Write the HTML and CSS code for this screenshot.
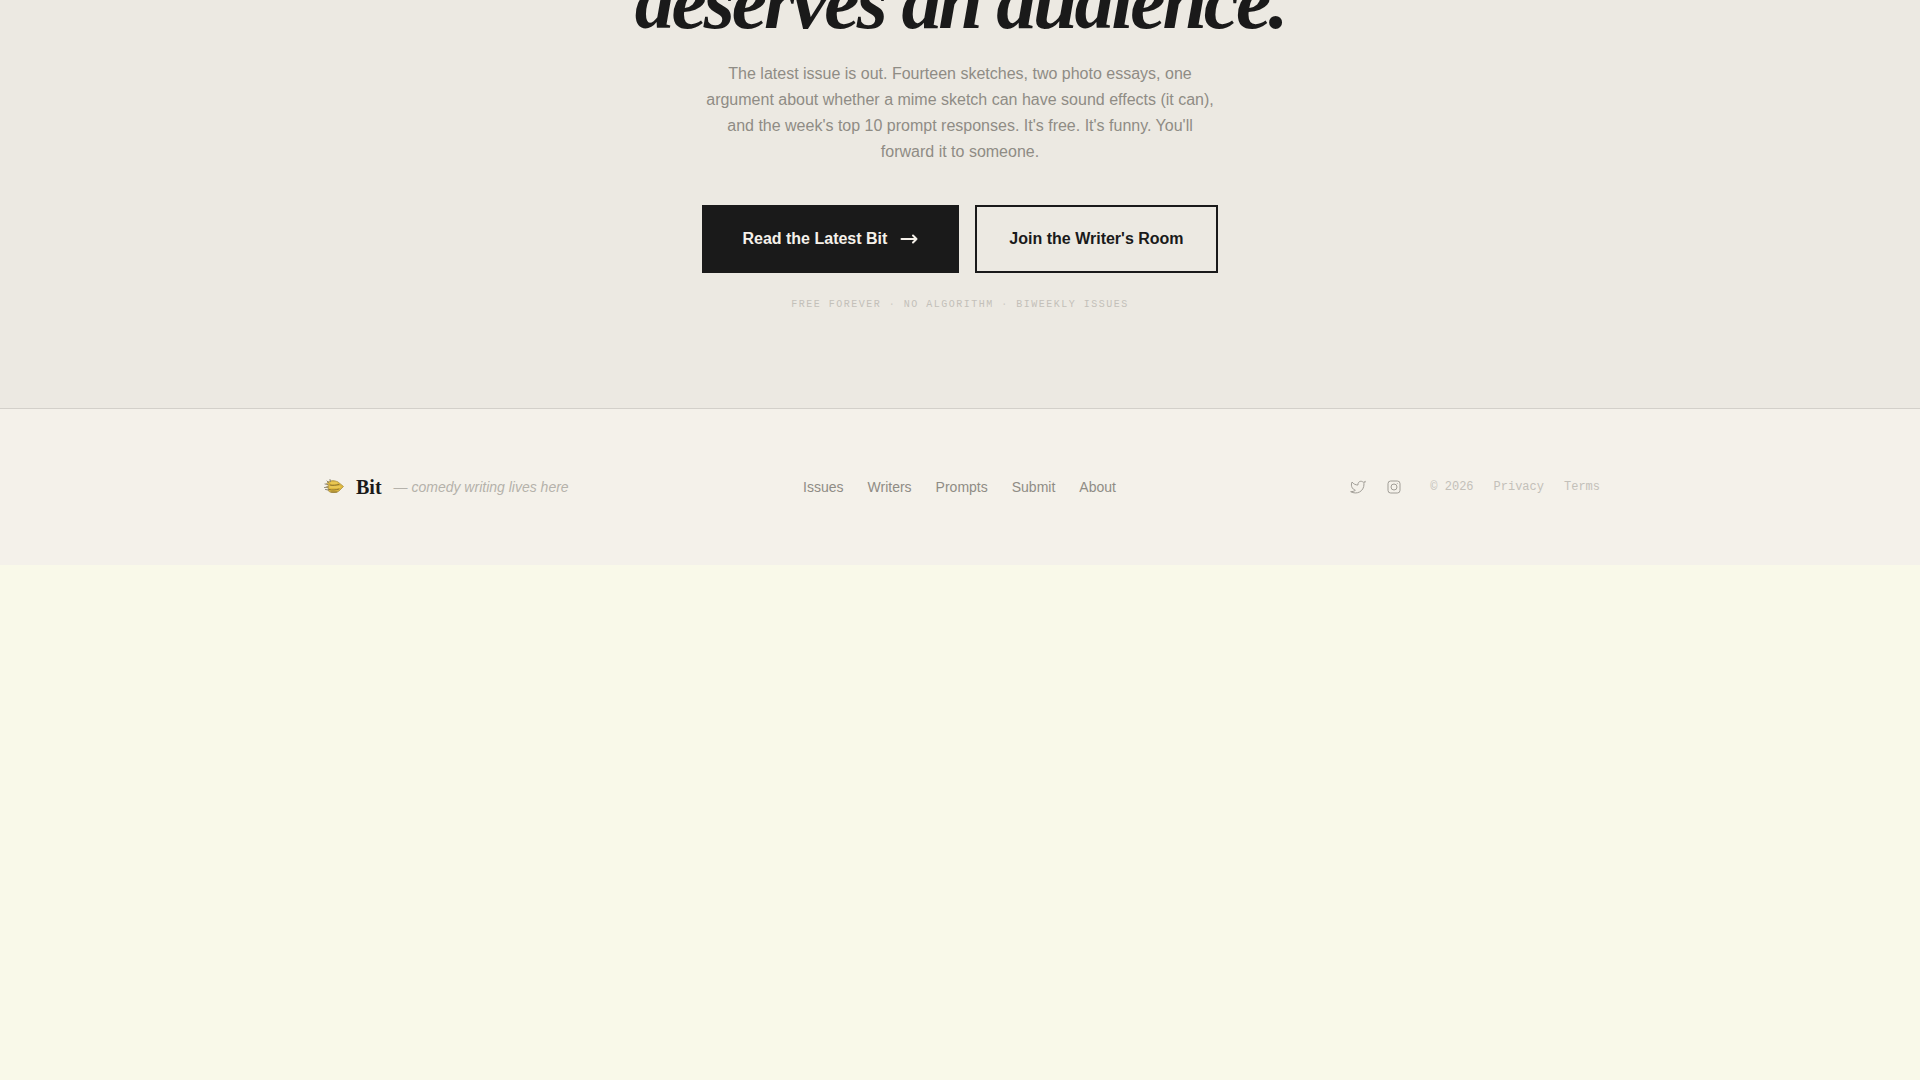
FILE: index.html
```html
<!DOCTYPE html>
<html lang="en">
<head>
<meta charset="utf-8">
<meta name="viewport" content="width=device-width, initial-scale=1">
<title>Bit</title>
<link rel="stylesheet" href="styles.css">
</head>
<body>
<main class="cta">
  <h2 class="cta-title">deserves an audience.</h2>
  <p class="cta-text">The latest issue is out. Fourteen sketches, two photo essays, one argument about whether a mime sketch can have sound effects (it can), and the week's top 10 prompt responses. It's free. It's funny. You'll forward it to someone.</p>
  <div class="cta-actions">
    <button class="btn btn-solid" type="button">Read the Latest Bit
      <svg class="arrow" viewBox="0 0 20 20" aria-hidden="true"><path d="M2.500 10h15M14 6.500l3.500 3.500-3.500 3.500"/></svg>
    </button>
    <button class="btn btn-outline" type="button">Join the Writer's Room</button>
  </div>
  <p class="cta-note">FREE FOREVER <span class="dot">·</span> NO ALGORITHM <span class="dot">·</span> BIWEEKLY ISSUES</p>
</main>
<footer class="footer">
  <div class="footer-inner">
    <div class="brand">
      <svg class="brand-mark" viewBox="0 0 28 28" aria-hidden="true">
        <path class="mark-body" d="M8 9c3-2 7-1.500 10 0l5.500 4.500-4.500 4.500c-3 2-7 2-10 .5l-1-1.500 1-1-2.500-2 2-1.500-1.500-1.500z"/>
        <path class="mark-line" d="M5 11l3 .5M4.500 14.500l4-.5M5.500 16.500l3 .5M7 8l2 2M10 6.500l.5 2"/>
        <path class="mark-stripe" d="M10 12c3 1 6 0 9-.5M9 16.500c3 1 7 .5 10-.5M11 19h6"/>
        <path class="mark-shine" d="M11 10h6M10 14h10"/>
      </svg>
      <span class="brand-name">Bit</span>
      <span class="brand-tag">— comedy writing lives here</span>
    </div>
    <nav class="footer-nav" aria-label="Footer">
      <a href="#issues">Issues</a>
      <a href="#writers">Writers</a>
      <a href="#prompts">Prompts</a>
      <a href="#submit">Submit</a>
      <a href="#about">About</a>
    </nav>
    <div class="footer-meta">
      <div class="social">
        <a href="#twitter" aria-label="Twitter"><svg viewBox="0 0 24 24" aria-hidden="true"><path d="M23 3.500c-1 .7-2 1.200-3.100 1.500-2.900-3.200-8-1.200-7.900 3v1C8.400 9.100 5.100 7.400 3 4.500c0 0-4 8.500 5 12.500-2 1.400-4.500 2.100-7 2 9 5 20 0 20-11.500l-.1-.8C22 5.700 22.700 4.700 23 3.500z"/></svg></a>
        <a href="#instagram" aria-label="Instagram"><svg viewBox="0 0 24 24" aria-hidden="true"><rect x="3" y="3" width="18" height="18" rx="4"/><circle cx="12" cy="12" r="4.500"/><path d="M17 6.500v1"/></svg></a>
      </div>
      <div class="legal">
        <span>© 2026</span>
        <a href="#privacy">Privacy</a>
        <a href="#terms">Terms</a>
      </div>
    </div>
  </div>
</footer>
</body>
</html>
```
FILE: styles.css
```css
* { box-sizing: border-box; }

body {
  margin: 0;
  min-height: 100vh;
  background: #f9f9e9;
  color: #1a1a1a;
  font-family: "Liberation Sans", Arial, sans-serif;
  font-size: 16px;
}

a { color: inherit; text-decoration: none; }

.cta {
  display: flex;
  flex-direction: column;
  align-items: center;
  padding: 0 24px 96px;
  background: #ece9e2;
  text-align: center;
  overflow: hidden;
}

.cta-title {
  margin: -39px 0 0;
  font-family: "Liberation Serif", "Times New Roman", serif;
  font-size: 80px;
  font-style: italic;
  font-weight: 700;
  line-height: 80px;
  letter-spacing: -0.04em;
}

.cta-text {
  max-width: 512px;
  margin: 20px 0 40px;
  color: #8f8c85;
  line-height: 26px;
}

.cta-actions {
  display: flex;
  flex-wrap: wrap;
  justify-content: center;
  gap: 16px;
}

.btn {
  display: inline-flex;
  align-items: center;
  justify-content: center;
  gap: 12px;
  min-height: 68px;
  border: 2px solid #1a1a1a;
  font-family: inherit;
  font-size: 16px;
  font-weight: 700;
  line-height: 24px;
  cursor: pointer;
}

.btn-solid { padding: 20px 38px; background: #1a1a1a; color: #f5f1ea; }
.btn-outline { padding: 20px 32px; background: transparent; color: #1a1a1a; }

.arrow {
  width: 20px;
  height: 20px;
  fill: none;
  stroke: currentColor;
  stroke-width: 2;
  stroke-linecap: round;
  stroke-linejoin: round;
}

.cta-note {
  margin: 24px 0 0;
  color: #c3c0b9;
  font-family: "Liberation Mono", "Courier New", monospace;
  font-size: 10px;
  line-height: 15px;
  letter-spacing: 0.15em;
}

.dot { color: #cfccc5; }

.footer {
  padding: 64px 24px;
  border-top: 1px solid #d3d0ca;
  background: #f4f1ea;
}

.footer-inner {
  display: flex;
  flex-wrap: wrap;
  align-items: center;
  justify-content: space-between;
  gap: 24px;
  max-width: 1280px;
  margin: 0 auto;
}

.brand { display: flex; align-items: center; gap: 8px; }

.brand-mark { width: 28px; height: 28px; fill: none; stroke-linecap: round; }
.mark-body { fill: #dfb83e; stroke: #b8a055; }
.mark-line { stroke: #8b8371; }
.mark-stripe { stroke: #8c7431; }
.mark-shine { stroke: #f2d568; }

.brand-name {
  font-family: "Liberation Serif", "Times New Roman", serif;
  font-size: 20px;
  font-weight: 700;
  line-height: 28px;
}

.brand-tag {
  margin-left: 4px;
  color: #b5b2ab;
  font-size: 14px;
  font-style: italic;
  line-height: 20px;
}

.footer-nav {
  display: flex;
  gap: 24px;
  color: #8f8c85;
  font-size: 14px;
  line-height: 20px;
}

.footer-meta { display: flex; align-items: center; gap: 28px; }

.social { display: flex; gap: 20px; }
.social a { display: flex; }

.social svg {
  width: 16px;
  height: 16px;
  fill: none;
  stroke: #a09d96;
  stroke-width: 1.5;
}

.legal {
  display: flex;
  gap: 20px;
  color: #c3c0b9;
  font-family: "Liberation Mono", "Courier New", monospace;
  font-size: 12px;
  line-height: 16px;
}
```
